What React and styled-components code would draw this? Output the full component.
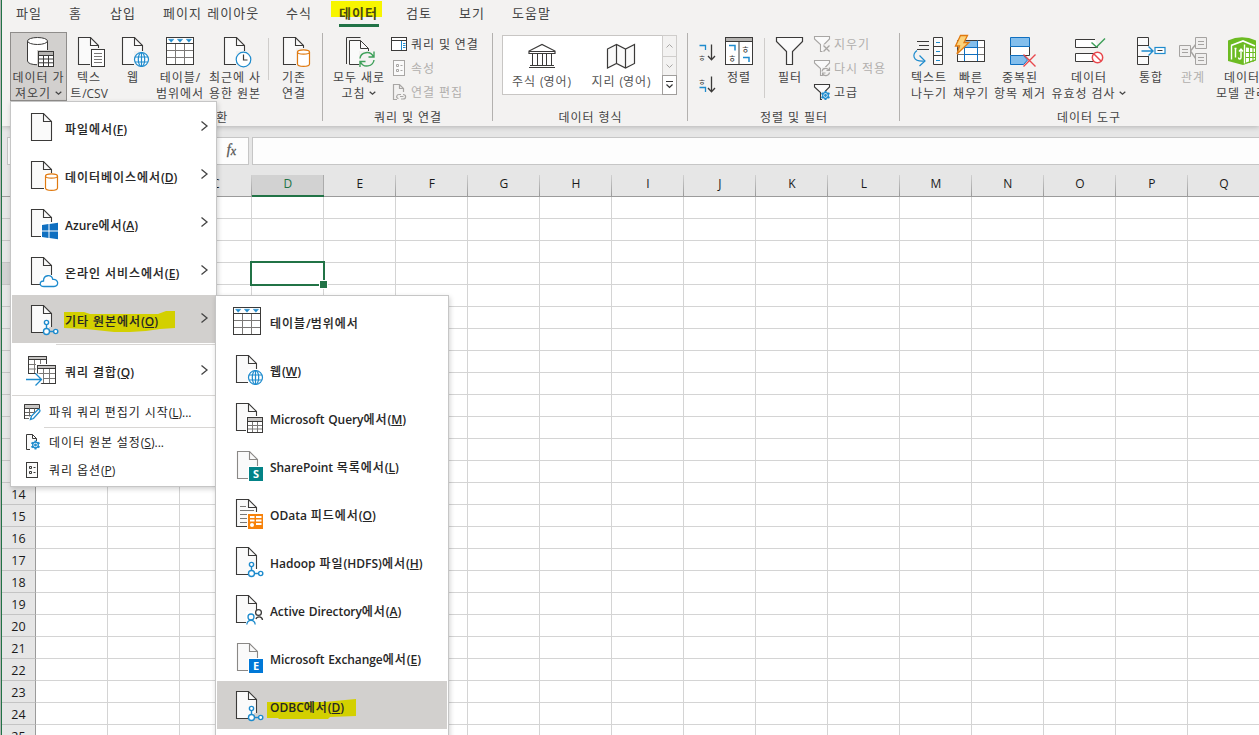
import React from "react";
import styled, { createGlobalStyle, css } from "styled-components";

const INK = "#3b3a39";
const BLUE = "#1e8bcd";
const ORANGE = "#e07a10";
const GREEN = "#217346";
const PAPER = "#fafafa";

const GlobalStyle = createGlobalStyle`
  * { box-sizing: border-box; }
  html, body { margin: 0; padding: 0; overflow: hidden; }
  body { font-family: "Open Sans", "Noto Sans CJK KR", sans-serif; font-size: 12px; color: #444; }
  svg { display: block; flex: none; overflow: visible; }
`;

/* ---------- text ---------- */

const Hangul = styled.span`
  font-family: "Noto Sans CJK KR", sans-serif;
  letter-spacing: ${(p) => p.$ls}px;
`;
const Latin = styled.span`
  letter-spacing: ${(p) => p.$ls}px;
  word-spacing: 0.8px;
`;
const Key = styled.span`
  text-decoration: underline;
  text-underline-offset: 1px;
  text-decoration-thickness: 1px;
`;

function Text({ children, ls = 0.95, latin = 0, hotkey }) {
  const runs = children.match(/[\u3131-\uD79D]+|[^\u3131-\uD79D]+/g) || [];
  return (
    <>
      {runs.map((r, i) =>
        /[\u3131-\uD79D]/.test(r) ? (
          <Hangul key={i} $ls={ls}>{r}</Hangul>
        ) : (
          <Latin key={i} $ls={r.length > 8 ? latin - 0.08 : latin}>{r}</Latin>
        )
      )}
      {hotkey && (
        <Latin $ls={latin}>(<Key>{hotkey}</Key>)</Latin>
      )}
    </>
  );
}

/* ---------- icons ---------- */

const Svg = ({ s = 32, children }) => (
  <svg width={s} height={s} viewBox={`0 0 ${s} ${s}`} fill="none" stroke={INK} strokeWidth="1">
    {children}
  </svg>
);

const Doc = ({ c = INK, x = 5.5 }) => (
  <g stroke={c} strokeWidth="1.1">
    <path d={`M${x} 2.5H${x + 12}L${x + 20} 10.5V29.5H${x}Z`} fill={PAPER} />
    <path d={`M${x + 12} 2.5V10.5H${x + 20}`} />
  </g>
);
/* blank patch that lets a badge cut into the page behind it */
const Cut = ({ x = 15, y = 15, w = 17, h = 17, fill = "#fff" }) => (
  <rect x={x} y={y} width={w} height={h} fill={fill} stroke="none" />
);
const Globe = () => (
  <g stroke={BLUE} strokeWidth="1.2">
    <circle cx="24.5" cy="24.5" r="7" fill="#fff" />
    <ellipse cx="24.5" cy="24.5" rx="3.2" ry="7" />
    <path d="M24.5 17.5v14M18 22h13M18 27h13" />
  </g>
);
const MiniTable = () => (
  <g>
    <rect x="16.5" y="16.5" width="15" height="15" fill="#fff" />
    <rect x="17" y="17" width="14" height="3" fill="#c8c6c4" stroke="none" />
    <path d="M16.5 20.5h15" />
    <path d="M21.5 21v10M26.5 21v10M17 24.5h14M17 28h14" stroke="#7a7876" />
  </g>
);
const Nodes = () => (
  <g stroke={BLUE} strokeWidth="1.4">
    <path d="M20.5 22v4M24 28.5h4" />
    <circle cx="20.5" cy="19.5" r="2.1" fill="#fff" />
    <circle cx="20.5" cy="28.5" r="3" fill="#fff" />
    <circle cx="29.7" cy="28.5" r="2.1" fill="#fff" />
  </g>
);
const Cylinder = () => (
  <g stroke={ORANGE} strokeWidth="1.2">
    <path d="M19.5 17v12c0 3.2 12 3.2 12 0V17" fill="#fff" />
    <ellipse cx="25.5" cy="17" rx="6" ry="2.2" fill="#fff" />
  </g>
);
const Badge = ({ color, letter }) => (
  <g stroke="none">
    <rect x="18" y="18" width="14" height="14" fill={color} />
    <text x="25" y="29" fontSize="11" fontWeight="700" fill="#fff" textAnchor="middle" fontFamily="Open Sans, sans-serif">{letter}</text>
  </g>
);

const BigTable = () => (
  <Svg>
    <rect x="2.5" y="2.5" width="27" height="27" fill="#fff" />
    <path d="M2.5 8.5h27" />
    <path d="M11.5 9v20M20.5 9v20M3 15.5h26M3 22.5h26" stroke="#7a7876" />
    <path d="M4.5 4.200h5.400L7.200 7.300zM13.300 4.200h5.400L16 7.300zM22.200 4.200h5.400L24.900 7.300z" fill={BLUE} stroke={BLUE} strokeWidth=".4" />
  </Svg>
);

const icons = {
  file: <Svg><Doc /></Svg>,
  database: <Svg><Doc /><Cut x={18} y={14} w={14} h={18} /><Cylinder /></Svg>,
  existing: <Svg><Doc /><Cut x={18} y={13} w={14} h={18} fill="#f3f2f1" /><Cylinder /></Svg>,
  azure: (
    <Svg>
      <Doc /><Cut />
      <path d="M16 18l6.500-.9v6.400H16zM23.500 17L32 15.800v7.700h-8.500zM16 24.500h6.500v6.400L16 30zM23.500 24.500H32v7.700L23.500 31z" fill="#0f6fc0" stroke="none" />
    </Svg>
  ),
  cloud: (
    <Svg>
      <Doc /><Cut x={14} y={20} w={18} h={11} />
      <path d="M18 31.500c-5 0-4.800-5.700-.5-5.500 0-6.500 8-7 9.300-1.600 6-.8 6.500 7.100 1.200 7.100z" fill="#fff" stroke={BLUE} strokeWidth="1.300" />
    </Svg>
  ),
  nodes: <Svg><Doc /><Cut x={23} y={24} w={8} h={7} fill="#d2d0ce" /><Nodes /></Svg>,
  hadoop: <Svg><Doc /><Cut x={18} y={24} w={13} h={7} /><Nodes /></Svg>,
  web: <Svg><Doc /><Cut x={17} y={16} w={10} h={15} /><Globe /></Svg>,
  webRibbon: <Svg><Doc /><Cut x={17} y={16} w={10} h={15} fill="#f3f2f1" /><Globe /></Svg>,
  table: <BigTable />,
  msquery: <Svg><Doc /><Cut x={15} y={15} w={12} h={16} /><MiniTable /></Svg>,
  sharepoint: <Svg><Doc c="#8a8886" x={6.5} /><Cut x={17} y={17} w={12} h={14} /><Badge color="#038387" letter="S" /></Svg>,
  exchange: <Svg><Doc c="#8a8886" x={6.5} /><Cut x={17} y={17} w={12} h={14} /><Badge color="#0078d7" letter="E" /></Svg>,
  odata: (
    <Svg>
      <Doc />
      <path d="M9 9.500h6M9 13.500h14M9 17.500h8M9 21.500h7M9 25.500h7" stroke="#7a7876" />
      <Cut x={16} y={15} w={12} h={16} />
      <rect x="17" y="17" width="15" height="15" fill="#f7820a" stroke="none" />
      <path d="M19 20h4.500M25 20h5.500M19 23.500h4.500M25 23.500h5.500M25 27h5.500" stroke="#fff" strokeWidth="1.900" />
      <circle cx="21" cy="28" r="2" fill="#fff" stroke="none" />
    </Svg>
  ),
  people: (
    <Svg>
      <Doc /><Cut x={15} y={18} w={12} h={13} />
      <g strokeWidth="1.300">
        <circle cx="27.500" cy="19.500" r="2.900" fill="#fff" />
        <path d="M25 26c.5-2.500 6-3.500 6.500 1" />
        <g stroke={BLUE}>
          <circle cx="20" cy="24" r="3" fill="#fff" />
          <path d="M15.800 31.500c.6-5.500 7.800-5.500 8.400 0" />
        </g>
      </g>
    </Svg>
  ),
  merge: (
    <Svg>
      <rect x="2.500" y="1.500" width="18" height="17" fill="#fff" />
      <rect x="3" y="2" width="17" height="2.500" fill="#c8c6c4" stroke="none" />
      <path d="M2.500 4.500h18" /><path d="M8.500 5v13M14.500 5v13M3 9.500h17M3 14h17" stroke="#7a7876" />
      <rect x="10" y="9" width="21" height="21" fill="#fff" stroke="none" />
      <rect x="11.500" y="10.500" width="18" height="18" fill="#fff" />
      <rect x="12" y="11" width="17" height="2.500" fill="#c8c6c4" stroke="none" />
      <path d="M11.500 13.500h18" /><path d="M17.500 14v14M23.500 14v14M12 18.500h17M12 23.500h17" stroke="#7a7876" />
      <path d="M0 19.500h10v-1h3l4 4v4l-4 4H0z" fill="#fff" stroke="none" />
      <path d="M0 24.500h16M9.500 18.500l6 6-6 6" stroke={BLUE} strokeWidth="1.300" />
    </Svg>
  ),
  getData: (
    <Svg>
      <path d="M4.500 6v20c0 5 20 5 20 0V6" fill="#fff" />
      <ellipse cx="14.500" cy="6" rx="10" ry="3.500" fill="#fff" />
      <Cut x={14} y={15} w={17} h={16} fill="#d2d0ce" />
      <rect x="15.500" y="16.500" width="15" height="15" fill="#fff" />
      <rect x="16" y="17" width="14" height="3" fill="#b5b3b1" stroke="none" />
      <path d="M15.500 20.500h15M20.500 20.500v11M25.500 20.500v11M16 24h14M16 27.800h14" />
    </Svg>
  ),
  csv: (
    <Svg>
      <Doc /><Cut x={17} y={13} w={12} h={18} fill="#f3f2f1" />
      <rect x="18.500" y="14.500" width="13" height="17" fill="#fff" />
      <path d="M21 18.500h8M21 21.500h8M21 24.500h8M21 27.500h8" stroke="#7a7876" />
    </Svg>
  ),
  recent: (
    <Svg>
      <Doc /><Cut x={17} y={16} w={10} h={15} fill="#f3f2f1" />
      <circle cx="24.500" cy="24.500" r="7.300" fill="#fff" stroke={BLUE} strokeWidth="1.200" />
      <path d="M24.500 19.500v5.500h4" strokeWidth="1.200" />
    </Svg>
  ),
  refresh: (
    <Svg>
      <path d="M3.500 29V2.500h14" />
      <path d="M6.500 5.500h11l8 8v16h-19z" fill={PAPER} /><path d="M17.500 5.500v8h8" />
      <Cut x={16} y={16} w={13} h={15} fill="#f3f2f1" />
      <g stroke="#3fa05a" strokeWidth="1.400">
        <path d="M17 23.500c.5-6.500 10.500-8.500 13.500-1.500M31 16.500V22h-5.500M31 25c-.8 6.500-10.500 8.500-13.500 2M17 32v-5.500h5.500" />
      </g>
    </Svg>
  ),
  stock: (
    <Svg>
      <path d="M3 12.500v-2.500L16 3.500 29 10v2.500z" fill="#fff" strokeWidth="1.200" />
      <path d="M3 10.500h26M4 24.500h24M3 26.500h26M6.500 12.500v12M11.500 12.500v12M16.500 12.500v12M20.500 12.500v12M25.500 12.500v12" />
    </Svg>
  ),
  map: (
    <Svg>
      <path d="M2.500 8l9-4.500 9 4.500 9-4.500v19l-9 4.500-9-4.500-9 4.500zM11.500 3.500v19M20.500 8v19" fill={PAPER} strokeWidth="1.200" />
    </Svg>
  ),
  sort: (
    <Svg>
      <rect x="2.500" y="2.500" width="27" height="27" fill="#fff" />
      <rect x="3" y="3" width="26" height="3.500" fill="#b5b3b1" stroke="none" />
      <path d="M2.500 6.500h27M16 6.500v23" />
      <path d="M6 10.500h6v5M20 22.500h6v4.500" stroke={BLUE} strokeWidth="1.500" />
      <g fill={INK} stroke="none" fontSize="9" fontFamily="Noto Sans CJK KR, sans-serif">
        <text x="5" y="26.500">ㅎ</text><text x="18.200" y="17.500">ㅎ</text>
      </g>
    </Svg>
  ),
  filter: <Svg><path d="M2.500 2.500h26v4l-10 10v13h-6v-13l-10-10z" fill={PAPER} strokeWidth="1.200" /></Svg>,
  textCols: (
    <Svg>
      <path d="M4 6.500h12M6 10.500h10M4 14.500h12" />
      <path d="M4 15.500c-5 4-4.500 11 6.500 10.500M6.500 20.500l5.500 5.500-5.500 5" stroke={BLUE} strokeWidth="1.200" />
      <path d="M20.500 2.500h9v27h-9zM20.500 11.500h9M20.500 20.500h9" fill={PAPER} />
      <path d="M23 7.500h4M23 16.500h4M23 25.500h4" stroke={BLUE} />
    </Svg>
  ),
  flash: (
    <Svg>
      <path d="M2.500 5.500h27v21h-27z" fill="#fff" />
      <rect x="9.500" y="5.500" width="13" height="7" fill="#83beec" />
      <path d="M22.500 5.500v21M2.500 12.500h27M2.500 19.500h27" stroke="#7a7876" />
      <path d="M9.500 5.500v21M9.500 26.500h13v-21M9.500 12.500h13M9.500 19.500h13" stroke="#0f6fc0" />
      <path d="M29.500 5.500v21h-27v-6" />
      <path d="M5.500.5h7l-3.500 7h5L2 19l2.500-8H.5z" fill="#fbd27a" stroke={ORANGE} strokeWidth="1.300" />
    </Svg>
  ),
  dup: (
    <Svg>
      <path d="M6.500 11.500h19v9h-19z" fill="#fff" />
      <path d="M6.500 2.500h19v9h-19zM6.500 20.500h13l4 4.500-4 4.500h-13z" fill="#83beec" stroke="#0f6fc0" />
      <path d="M19.500 19.500l12 12M31.500 19.500l-12 12" stroke="#e8484d" strokeWidth="1.400" />
    </Svg>
  ),
  valid: (
    <Svg>
      <path d="M22 4.500H2.500v8h22V11M22 18.500H2.500v8h20" fill="#fff" />
      <path d="M18.500 7.500l5 4.500 8.500-8.500" stroke="#3fa05a" strokeWidth="1.500" />
      <circle cx="24.500" cy="22.500" r="5.200" fill="#fff" stroke="#e8484d" strokeWidth="1.500" />
      <path d="M21 19l7 7" stroke="#e8484d" strokeWidth="1.500" />
    </Svg>
  ),
  consolidate: (
    <Svg>
      <path d="M2.500 2.500h11v27h-11zM2.500 10.500h11M2.500 21.500h11" fill={PAPER} />
      <Cut x={13} y={11} w={2} h={10} fill={PAPER} />
      <path d="M6.500 16H18M13.500 11.500l4.500 4.500-4.500 4.500" stroke={BLUE} strokeWidth="1.400" />
      <rect x="20" y="12.500" width="10" height="6" fill="#fff" stroke={BLUE} strokeWidth="1.200" /><path d="M22.500 15.500h5" />
    </Svg>
  ),
  relation: (
    <Svg>
      <g stroke="#a5a3a1" fill="#f0efee">
        <path d="M13.500 16L19 9M13.500 16L19 24" strokeWidth="1.400" />
        <path d="M2.500 10.500h11v11h-11zM18.500 2.500h11v11h-11zM18.500 18.500h11v11h-11z" />
        <path d="M5 14.500h6M5 17.500h6M21 6.500h6M21 9.500h6M21 22.500h6M21 25.500h6" />
      </g>
    </Svg>
  ),
  model: (
    <Svg>
      <path d="M2 5.500Q16-1 30 5.500V25.500L17 30 2 26z" fill="#6cbb22" stroke="none" />
      <path d="M5 10.500L17 6l12 5" stroke="#fff" strokeWidth="1.800" />
      <path d="M5.500 10.500v14" stroke="#fff" strokeWidth="1.400" />
      <path d="M18.500 9.500v19" stroke="#fff" strokeWidth="1.400" />
      <path d="M20 12.500l9 1v11l-9 3z" fill="#fff" stroke="none" />
      <path d="M23.500 12v16M27 12v15M19.500 17.500h10M19.500 22.500h10" stroke="#6cbb22" strokeWidth="1.100" />
      <path d="M9.500 13.500v9M15 14.500v8c0 2-2.500 2-2.500 0M13 16.500l2-2.500 2 2.500M8.500 13.500h2" stroke="#fff" strokeWidth="1.400" />
    </Svg>
  ),
};

const Gear = ({ x, y }) => (
  <g stroke={BLUE} strokeWidth="1.300">
    <circle cx={x} cy={y} r="2.800" fill="#fff" />
    <path d={`M${x} ${y - 4.5}v2M${x} ${y + 2.5}v2M${x - 4} ${y - 2.3}l1.700 1M${x + 4} ${y - 2.3}l-1.700 1M${x - 4} ${y + 2.3}l1.700-1M${x + 4} ${y + 2.3}l-1.700-1`} strokeWidth="2" />
    <circle cx={x} cy={y} r=".8" />
  </g>
);
const OptionsShape = ({ c = INK }) => (
  <g stroke={c}>
    <rect x="2.500" y=".5" width="11" height="15" fill={PAPER} />
    <path d="M5.500 4.500h2v2h-2zM5.500 9.500h2v2h-2zM9.500 5.500h2M9.500 10.500h2" />
  </g>
);
const Funnel = ({ c }) => (
  <path d="M.5.500h15V3L10 8.500v7H6.500v-7L.5 3z" stroke={c} fill={PAPER} strokeWidth="1.100" />
);

const small = {
  queries: (
    <Svg s={16}>
      <rect x=".5" y="1.500" width="15" height="13" fill="#fff" />
      <path d="M.5 4.500h15" />
      <path d="M10.500 5v9" stroke={BLUE} />
      <path d="M12 7.500h2.500M12 9.500h2.500M12 11.500h2.500" stroke={BLUE} />
    </Svg>
  ),
  props: <Svg s={16}><OptionsShape c="#a8a6a4" /></Svg>,
  editLinks: (
    <Svg s={16}>
      <g stroke="#a8a6a4" strokeWidth="1.200">
        <path d="M6 15.500H2.500V.5h6l4 4V8M8.500.5v4h4" />
        <path d="M7.500 14.500c-3-.5-2-4 .5-4h2M9 12.500h3.500M12 10.500c3.500 0 3.500 4.500 0 4.500h-2" />
      </g>
    </Svg>
  ),
  clear: <Svg s={16}><Funnel c="#a8a6a4" /><Cut x={8.5} y={8.500} w={8} h={8} fill="#f3f2f1" /><path d="M9.500 9.500l6 6M15.500 9.500l-6 6" stroke="#a8a6a4" strokeWidth="1.300" /></Svg>,
  reapply: <Svg s={16}><Funnel c="#a8a6a4" /><Cut x={8} y={7} w={8} h={9} fill="#f3f2f1" /><path d="M8 11.500c.5-4 6-4 7-1M15.500 7.500v3h-3M15.500 12.500c-.5 4-6 4-7 1M8.500 16v-3h3" stroke="#a8a6a4" strokeWidth="1.200" /></Svg>,
  advanced: <Svg s={16}><Funnel c={INK} /><Cut x={8} y={7} w={8} h={9} fill="#f3f2f1" /><Gear x={11.5} y={11.5} /></Svg>,
  editor: (
    <Svg s={16}>
      <path d="M.5.500h15v4h-15z" fill="#c8c6c4" />
      <path d="M.5 4.500v10H5M5.500 4.500v8M10.500 4.500v4M.5 8.500H11M.5 11.500H7" stroke="#6a6866" />
      <path d="M.5.500v14.500" />
      <path d="M6.500 15.500l1-3.500 6.500-6.500c1.500-.5 2.500 1 1.700 2L9.500 14.500z" fill="#fff" stroke={BLUE} strokeWidth="1.300" />
    </Svg>
  ),
  source: (
    <Svg s={16}>
      <path d="M6 15.500H2.500V.5h6l4 4V7M8.500.5v4h4" fill={PAPER} /><Gear x={11.5} y={11} />
    </Svg>
  ),
  options: <Svg s={16}><OptionsShape /></Svg>,
};

const Caret = () => (
  <svg width="7" height="5" viewBox="0 0 7 5" fill="none" stroke="#444" strokeWidth="1.200"><path d="M.7.700l2.800 2.600L6.300.700" /></svg>
);

/* ---------- window and tabs ---------- */

const Window = styled.div`
  position: relative;
  width: 1259px;
  height: 735px;
  overflow: hidden;
  display: flex;
  flex-direction: column;
  background: #e6e6e6;
  border-left: 1px solid #b5b5b5;
  box-shadow: inset 1px 0 0 ${GREEN};
  padding-left: 1px;
  white-space: nowrap;
`;
const TabBar = styled.div`
  flex: none;
  display: flex;
  gap: 27px;
  height: 28px;
  padding: 0 0 0 14px;
  background: #f3f2f1;
`;
const Tab = styled.div`
  position: relative;
  width: ${(p) => p.$w}px;
  height: 27px;
  line-height: 26px;
  font-size: 13px;
  color: #444;
  ${(p) => p.$active && css`
    font-weight: 700;
    color: #4a4a12;
    border-bottom: 3px solid ${GREEN};
    &::before {
      content: "";
      position: absolute;
      left: -8px;
      top: 1px;
      width: 51px;
      height: 16px;
      background: #f7f500;
    }
    & > span { position: relative; }
  `}
`;

/* ---------- ribbon ---------- */

const Ribbon = styled.div`
  flex: none;
  display: flex;
  height: 98px;
  background: #f3f2f1;
  position: relative;
  box-shadow: 0 1px 5px rgba(0, 0, 0, 0.22);
  clip-path: inset(0 0 -8px 0);
`;
const Group = styled.div`
  flex: none;
  display: flex;
  flex-direction: column;
  width: ${(p) => p.$w}px;
  background: linear-gradient(#b3b1af, #b3b1af) right 5px / 1px 88px no-repeat;
`;
const GroupBody = styled.div`
  display: flex;
  height: 76px;
  padding: 4px 0 0 ${(p) => p.$pl || 0}px;
`;
const GroupLabel = styled.div`
  text-align: center;
  line-height: 16px;
  padding-top: 5px;
  color: #444;
`;
const BigButton = styled.div`
  flex: none;
  width: ${(p) => p.$w}px;
  height: 69px;
  padding-top: 3px;
  margin-right: ${(p) => p.$mr || 0}px;
  display: flex;
  flex-direction: column;
  align-items: center;
  color: ${(p) => (p.$off ? "#b1afad" : "#444")};
  ${(p) => p.$pressed && css`
    background: #d2d0ce;
    box-shadow: inset 0 0 0 1px #8f8d8b;
  `}
`;
const BigLabel = styled.div`
  margin-top: 2px;
  line-height: 16px;
  text-align: center;
`;
const LabelLine = styled.div`
  display: flex;
  justify-content: center;
  align-items: center;
  height: 16px;
  gap: 4px;
`;
const VLine = styled.div`
  flex: none;
  width: 1px;
  height: ${(p) => p.$h}px;
  margin: 6px ${(p) => p.$r}px 0 ${(p) => p.$l}px;
  background: #cfcdcb;
`;
const SmallList = styled.div`
  display: flex;
  flex-direction: column;
  margin-left: 2px;
`;
const SmallButton = styled.div`
  flex: none;
  display: flex;
  align-items: center;
  gap: 4px;
  height: 24px;
  color: ${(p) => (p.$off ? "#b1afad" : "#444")};
`;
const SortColumn = styled.div`
  display: flex;
  flex-direction: column;
  gap: 12px;
  width: 20px;
  padding-top: 11px;
`;
const Gallery = styled.div`
  display: flex;
  width: 175px;
  height: 60px;
  margin: 3px 0 0 9px;
  border: 1px solid #c8c6c4;
  background: #fff;
`;
const GalleryItem = styled.div`
  flex: none;
  width: ${(p) => p.$w}px;
  padding-top: 5px;
  display: flex;
  flex-direction: column;
  align-items: center;
  line-height: 15px;
  color: #555;
`;
const GalleryScroll = styled.div`
  flex: none;
  display: flex;
  flex-direction: column;
  width: 15px;
  margin: -1px -1px -1px auto;
`;
const ScrollCell = styled.div`
  display: flex;
  align-items: center;
  justify-content: center;
  flex: none;
  height: ${(p) => p.$h}px;
  margin-bottom: -1px;
  border: 1px solid ${(p) => (p.$on ? "#a09e9c" : "#cfcdcb")};
  background: ${(p) => (p.$on ? "#fff" : "#f3f2f1")};
`;

function Big({ icon, lines, w, mr, off, pressed, caret }) {
  return (
    <BigButton $w={w} $mr={mr} $off={off} $pressed={pressed}>
      {icons[icon]}
      <BigLabel>
        {lines.map((l, i) => (
          <LabelLine key={l}>
            <span><Text>{l}</Text></span>
            {caret && i === lines.length - 1 && <Caret />}
          </LabelLine>
        ))}
      </BigLabel>
    </BigButton>
  );
}
const Small = ({ icon, label, off }) => (
  <SmallButton $off={off}>{small[icon]}<span><Text>{label}</Text></span></SmallButton>
);
const SortIcon = ({ flip }) => (
  <Svg s={20}>
    <path d={flip ? "M2.500 12.500h6v4.500" : "M2.500 2.500h6v4.500"} stroke={BLUE} strokeWidth="1.300" />
    <text x="1" y={flip ? 9.5 : 17.5} fontSize="8.500" fill={INK} stroke="none" fontFamily="Noto Sans CJK KR, sans-serif">ㅎ</text>
    <path d="M14.500 1.500v15M11 13l3.500 3.700L18 13" strokeWidth="1.300" />
  </Svg>
);

/* ---------- formula bar ---------- */

const FormulaBar = styled.div`
  flex: none;
  display: flex;
  gap: 3px;
  height: 49px;
  padding: 11px 0 10px 5px;
`;
const NameBox = styled.div`
  width: 242px;
  border: 1px solid #c6c6c6;
  background: #fdfdfd;
  text-align: right;
  padding-right: 12px;
  font: italic 14px/24px "Liberation Serif", serif;
  color: #555;
  -webkit-text-stroke: 0.3px #555;
  & > sub { font-size: 12px; line-height: 0; vertical-align: -1px; }
`;
const FormulaInput = styled.div`
  flex: 1;
  border: 1px solid #c6c6c6;
  border-right: 0;
  background: #fdfdfd;
`;

/* ---------- sheet ---------- */

const Sheet = styled.div`
  position: relative;
  flex: none;
  display: grid;
  grid-template-columns: 34px repeat(18, 72px);
  grid-template-rows: 22px repeat(25, 22px);
  font: 13px "Open Sans", sans-serif;
  color: #1a1a1a;
`;
const ColHead = styled.div`
  text-align: center;
  line-height: 17px;
  font-size: 12px;
  padding-right: 0.4px;
  border-bottom: 1px solid #9b9b9b;
  background: linear-gradient(#d0d0d0, #9b9b9b) right / 1px 100% no-repeat;
  ${(p) => p.$on && css`
    background: #d2d2d2;
    color: ${GREEN};
    border-bottom: 2px solid ${GREEN};
    box-shadow: inset -1px 0 #ababab;
  `}
`;
const RowHead = styled.div`
  text-align: center;
  line-height: 23px;
  height: 22px;
  font-size: 12.5px;
  border-right: 1px solid #9b9b9b;
  border-bottom: 1px solid #c4c4c4;
  background: ${(p) => (p.$on ? "#d2d2d2" : "#e6e6e6")};
`;
const Cell = styled.div`
  position: relative;
  background: #fff;
  border-right: 1px solid #d4d4d4;
  border-bottom: 1px solid #d4d4d4;
`;
const Selection = styled.div`
  position: absolute;
  z-index: 1;
  left: -2px;
  top: -2px;
  width: 75px;
  height: 25px;
  border: 2px solid ${GREEN};
  &::after {
    content: "";
    position: absolute;
    right: -5px;
    bottom: -5px;
    width: 7px;
    height: 7px;
    border: 1px solid #fff;
    background: ${GREEN};
  }
`;

/* ---------- menus ---------- */

const Menu = styled.div`
  position: absolute;
  z-index: ${(p) => p.$z};
  left: ${(p) => p.$x}px;
  top: ${(p) => p.$y}px;
  width: ${(p) => p.$w}px;
  height: ${(p) => p.$h}px;
  padding: 1px;
  border: 1px solid #c6c6c6;
  background: #fff;
  box-shadow: 1px 2px 5px rgba(0, 0, 0, 0.18);
  color: #262626;
`;
const MenuItem = styled.div`
  position: relative;
  display: flex;
  align-items: center;
  gap: 7px;
  height: 48px;
  padding: 0 7px 0 14px;
  font-weight: 600;
  background: ${(p) => (p.$on ? "#d2d0ce" : "transparent")};
  ${Hangul} { font-weight: 500; -webkit-text-stroke: 0.15px currentColor; }
`;
const MenuText = styled.span`
  position: relative;
  flex: 1;
  padding-top: ${(p) => p.$t}px;
`;
const ArrowSlot = styled.span`
  padding-bottom: 2px;
`;
const SmallItem = styled.div`
  display: flex;
  align-items: center;
  gap: 9px;
  height: ${(p) => p.$h}px;
  padding-left: 12px;
`;
const Divider = styled.div`
  height: 1px;
  margin: ${(p) => p.$m || 0}px 0 ${(p) => p.$b || 0}px ${(p) => p.$x || 0}px;
  background: #d8d6d4;
`;
const Marker = styled.svg`
  position: absolute;
  left: ${(p) => p.$x}px;
  top: ${(p) => p.$y}px;
`;
const Chevron = () => (
  <svg width="8" height="10" viewBox="0 0 8 10" fill="none" stroke="#444" strokeWidth="1.300"><path d="M1.500.5L7 5 1.500 9.500" /></svg>
);

const Item = ({ icon, label, hotkey, on, arrow, marker, drop = 4 }) => (
  <MenuItem $on={on}>
    {marker}
    {icons[icon]}
    <MenuText $t={drop}><Text hotkey={hotkey}>{label}</Text></MenuText>
    {arrow && <ArrowSlot><Chevron /></ArrowSlot>}
  </MenuItem>
);

const TABS = [["파일", 26], ["홈", 14], ["삽입", 26], ["페이지 레이아웃", 96], ["수식", 26], ["데이터", 40], ["검토", 26], ["보기", 26], ["도움말", 39]];
const COLS = "ABCDEFGHIJKLMNOPQR".split("");
const ROWS = Array.from({ length: 25 }, (_, i) => i + 1);
const SUB = [
  ["table", "테이블/범위에서"],
  ["web", "웹", "W"],
  ["msquery", "Microsoft Query에서", "M"],
  ["sharepoint", "SharePoint 목록에서", "L"],
  ["odata", "OData 피드에서", "O"],
  ["hadoop", "Hadoop 파일(HDFS)에서", "H"],
  ["people", "Active Directory에서", "A"],
  ["exchange", "Microsoft Exchange에서", "E"],
];

export default function App() {
  return (
    <>
      <GlobalStyle />
      <Window>
        <TabBar>
          {TABS.map(([t, w]) => (
            <Tab key={t} $w={w} $active={t === "데이터"}>
              <span><Text ls={1.04} latin={1}>{t}</Text></span>
            </Tab>
          ))}
        </TabBar>

        <Ribbon>
          <Group $w={321}>
            <GroupBody $pl={8}>
              <Big w={57} icon="getData" lines={["데이터 가", "져오기"]} pressed caret />
              <Big w={44} icon="csv" lines={["텍스", "트/CSV"]} />
              <Big w={44} icon="webRibbon" lines={["웹"]} />
              <Big w={50} mr={2} icon="table" lines={["테이블/", "범위에서"]} />
              <Big w={56} icon="recent" lines={["최근에 사", "용한 원본"]} />
              <VLine $h={42} $l={5} $r={3} />
              <Big w={44} icon="existing" lines={["기존", "연결"]} />
            </GroupBody>
            <GroupLabel><Text>데이터 가져오기 및 변환</Text></GroupLabel>
          </Group>

          <Group $w={170}>
            <GroupBody>
              <Big w={72} mr={-6} icon="refresh" lines={["모두 새로", "고침"]} caret />
              <SmallList>
                <Small icon="queries" label="쿼리 및 연결" />
                <Small icon="props" label="속성" off />
                <Small icon="editLinks" label="연결 편집" off />
              </SmallList>
            </GroupBody>
            <GroupLabel><Text>쿼리 및 연결</Text></GroupLabel>
          </Group>

          <Group $w={195}>
            <GroupBody>
              <Gallery>
                <GalleryItem $w={77}>{icons.stock}<span><Text>주식 (영어)</Text></span></GalleryItem>
                <GalleryItem $w={82}>{icons.map}<span><Text>지리 (영어)</Text></span></GalleryItem>
                <GalleryScroll>
                  <ScrollCell $h={22}><svg width="7" height="4" fill="none" stroke="#a8a6a4"><path d="M.5 3.500l3-3 3 3" /></svg></ScrollCell>
                  <ScrollCell $h={20}><svg width="7" height="4" fill="none" stroke="#a8a6a4"><path d="M.5.500l3 3 3-3" /></svg></ScrollCell>
                  <ScrollCell $h={20} $on><svg width="7" height="8" fill="none" stroke="#333"><path d="M0 .5h7M.5 3.500l3 3 3-3" strokeWidth="1.200" /></svg></ScrollCell>
                </GalleryScroll>
              </Gallery>
            </GroupBody>
            <GroupLabel><Text>데이터 형식</Text></GroupLabel>
          </Group>

          <Group $w={212}>
            <GroupBody $pl={9}>
              <SortColumn><SortIcon /><SortIcon flip /></SortColumn>
              <Big w={44} icon="sort" lines={["정렬"]} />
              <VLine $h={60} $l={3} $r={3} />
              <Big w={44} icon="filter" lines={["필터"]} />
              <SmallList>
                <Small icon="clear" label="지우기" off />
                <Small icon="reapply" label="다시 적용" off />
                <Small icon="advanced" label="고급" />
              </SmallList>
            </GroupBody>
            <GroupLabel><Text>정렬 및 필터</Text></GroupLabel>
          </Group>

          <Group $w={378}>
            <GroupBody $pl={8}>
              <Big w={42} icon="textCols" lines={["텍스트", "나누기"]} />
              <Big w={42} icon="flash" lines={["빠른", "채우기"]} />
              <Big w={56} icon="dup" lines={["중복된", "항목 제거"]} />
              <Big w={82} icon="valid" lines={["데이터", "유효성 검사"]} caret />
              <Big w={42} icon="consolidate" lines={["통합"]} />
              <Big w={42} icon="relation" lines={["관계"]} off />
              <Big w={56} icon="model" lines={["데이터", "모델 관리"]} />
            </GroupBody>
            <GroupLabel><Text>데이터 도구</Text></GroupLabel>
          </Group>
        </Ribbon>

        <FormulaBar>
          <NameBox>f<sub>x</sub></NameBox>
          <FormulaInput />
        </FormulaBar>

        <Sheet>
          <ColHead />
          {COLS.map((c) => <ColHead key={c} $on={c === "D"}>{c}</ColHead>)}
          {ROWS.map((r) => (
            <React.Fragment key={r}>
              <RowHead $on={r === 4}>{r}</RowHead>
              {COLS.map((c) => (
                <Cell key={c}>{r === 4 && c === "D" && <Selection />}</Cell>
              ))}
            </React.Fragment>
          ))}
        </Sheet>

        <Menu $z={2} $x={9} $y={101} $w={207} $h={386}>
          <Item icon="file" label="파일에서" hotkey="F" arrow />
          <Item icon="database" label="데이터베이스에서" hotkey="D" arrow />
          <Item icon="azure" label="Azure에서" hotkey="A" arrow />
          <Item icon="cloud" label="온라인 서비스에서" hotkey="E" arrow />
          <Item icon="nodes" label="기타 원본에서" hotkey="O" arrow on marker={
            <Marker $x={52} $y={16} width="112" height="22"><path d="M0 1H20L26 3H94L102 0H111V17L96 18L82 20L66 21H50L22 18L0 17Z" fill="#d3d000" /></Marker>
          } />
          <Divider $m={1} $b={2} $x={44} />
          <Item icon="merge" label="쿼리 결합" hotkey="Q" arrow drop={2} />
          <Divider />
          <SmallItem $h={31}>{small.editor}<span><Text hotkey="L">파워 쿼리 편집기 시작</Text>...</span></SmallItem>
          <Divider $x={32} />
          <SmallItem $h={28}>{small.source}<span><Text hotkey="S">데이터 원본 설정</Text>...</span></SmallItem>
          <SmallItem $h={28}>{small.options}<span><Text hotkey="P">쿼리 옵션</Text></span></SmallItem>
        </Menu>

        <Menu $z={3} $x={214} $y={295} $w={234} $h={460}>
          {SUB.map(([icon, label, hotkey]) => (
            <Item key={icon} icon={icon} label={label} hotkey={hotkey} />
          ))}
          <Item icon="nodes" label="ODBC에서" hotkey="D" on marker={
            <Marker $x={50} $y={18} width="90" height="21"><path d="M0 3H58L78 1L89 0V17L63 18L61 20H12L11 19H0Z" fill="#d3d000" /></Marker>
          } />
        </Menu>
      </Window>
    </>
  );
}
